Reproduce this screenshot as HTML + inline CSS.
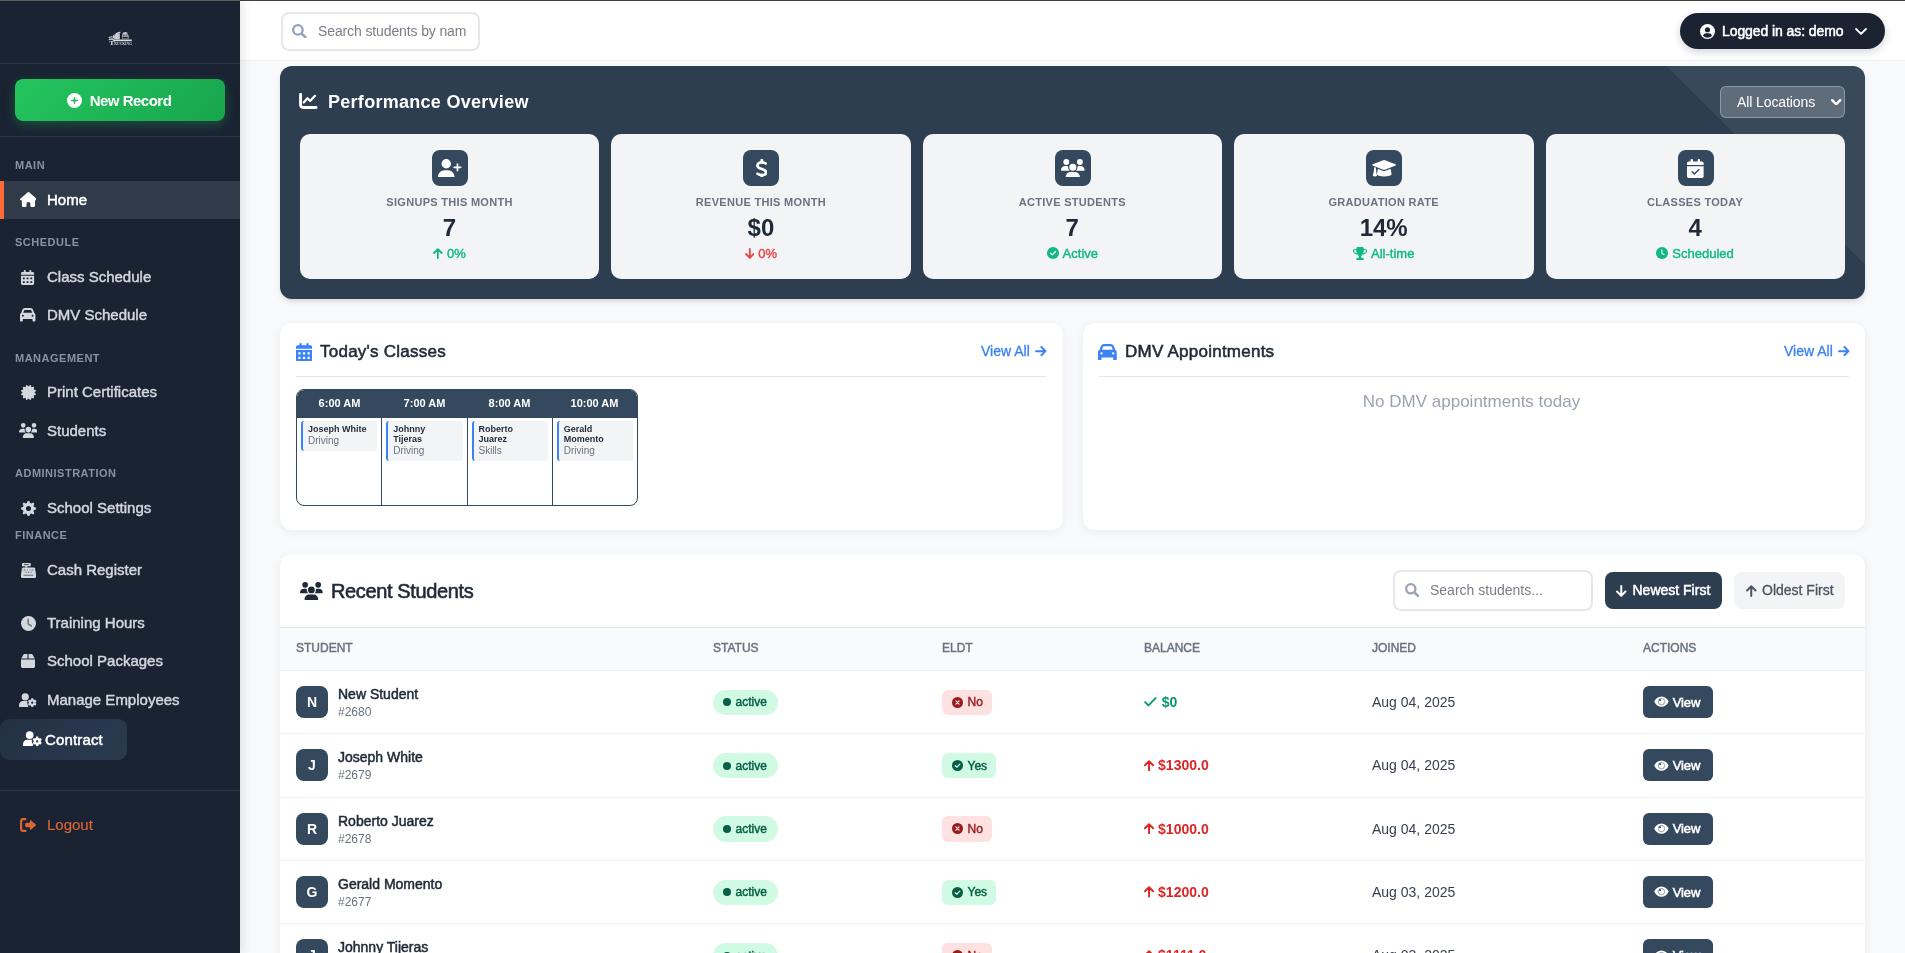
<!DOCTYPE html>
<html lang="en">
<head>
<meta charset="utf-8">
<title>Dashboard</title>
<style>
*{box-sizing:border-box;margin:0;padding:0}
html,body{width:1905px;height:953px;overflow:hidden}
body{font-family:"Liberation Sans",Arial,sans-serif;background:#f8f9fa;color:#1f2937;position:relative;-webkit-font-smoothing:antialiased}
svg{display:block;flex:none}
.abs{position:absolute}
.wrap{position:absolute;left:0;top:0;width:1905px;height:953px;overflow:hidden;will-change:transform;background:#f8f9fa}
.topline{position:absolute;left:0;top:0;width:1905px;height:1px;background:linear-gradient(90deg,#605e5b 0,#605e5b 240px,#3e3e3e 240px);z-index:50}
/* ---------- sidebar ---------- */
.sidebar{position:absolute;left:0;top:0;width:240px;height:953px;background:#1a2332;z-index:20;box-shadow:2px 0 10px rgba(15,23,42,.12)}
.sb-line{position:absolute;left:0;width:240px;height:1px;background:#2d3748}
.newrec{position:absolute;left:15px;top:79px;width:210px;height:42px;border-radius:8px;background:linear-gradient(135deg,#24c55f 0%,#18a54c 100%);box-shadow:0 4px 12px rgba(34,197,94,.28);display:flex;align-items:center;justify-content:center;color:#fff;font-weight:700;font-size:15px;letter-spacing:-.5px;--h:#1fb556;padding-right:2px}
.newrec svg{margin-right:8px}
.sec{position:absolute;left:15px;font-size:11px;font-weight:700;letter-spacing:.5px;color:#8b919d;text-transform:uppercase;line-height:14px;white-space:nowrap}
.nav{position:absolute;left:0;width:240px;height:38px;display:flex;align-items:center;color:#d3d7de;font-size:15px;font-weight:400;-webkit-text-stroke:.45px currentColor;white-space:nowrap}
.nav .ic{position:absolute;left:18px;top:0;width:20px;height:38px;display:flex;align-items:center;justify-content:center}
.nav .tx{position:absolute;left:47px;top:0;line-height:38px}
.nav.active{background:#303a49;color:#fff;-webkit-text-stroke:.5px currentColor}
.nav.active:before{content:"";position:absolute;left:0;top:0;width:4px;height:38px;background:#ff6b35}
.contract{position:absolute;left:0;top:719px;width:127px;height:41px;border-radius:9px;background:linear-gradient(135deg,#233044 0%,#2a3b50 100%);color:#fff;font-weight:400;-webkit-text-stroke:.5px #fff;letter-spacing:.15px;font-size:15px}
.logout{color:#df6434;font-weight:400;-webkit-text-stroke:.15px currentColor}
/* ---------- header ---------- */
.header{position:absolute;left:240px;top:1px;width:1665px;height:60px;background:#fff;border-bottom:1px solid #eef0f3;z-index:5}
.hsearch{position:absolute;left:41px;top:10.5px;width:199px;height:39px;border:2px solid #e5e7eb;border-radius:8px;background:#fff}
.hsearch .ph{position:absolute;left:35px;top:0;line-height:35.5px;font-size:14px;color:#7a7f87;white-space:nowrap;width:148.3px;overflow:hidden;letter-spacing:-.12px}
.userpill{position:absolute;left:1440px;top:12px;width:205px;height:36px;border-radius:18px;background:#1b2333;color:#fff;font-weight:400;-webkit-text-stroke:.5px #fff;letter-spacing:-.08px;font-size:14px;box-shadow:0 3px 8px rgba(15,23,42,.18)}

/* ---------- performance ---------- */
.perf{position:absolute;left:280px;top:66px;width:1585px;height:233px;border-radius:12px;background:#2c3e50;overflow:hidden;box-shadow:0 4px 6px -1px rgba(0,0,0,.1),0 2px 4px -2px rgba(0,0,0,.1)}
.perf-corner{position:absolute;right:0;top:0;width:198px;height:198px;background:linear-gradient(45deg,rgba(255,255,255,0) 50%,rgba(255,255,255,.06) 50%)}
.ptitle{color:#fff;font-size:18px;font-weight:700;letter-spacing:.28px;line-height:28px;white-space:nowrap}
.locsel{position:absolute;left:1440px;top:20px;width:125px;height:32px;border-radius:6px;background:rgba(255,255,255,.2);border:1px solid rgba(255,255,255,.3);color:#fff;font-size:14px;letter-spacing:-.1px}
.stat{position:absolute;top:68px;width:299.4px;height:145px;border-radius:10px;background:#f3f4f6;text-align:center}
.sic{--h:#34495e;position:absolute;left:132px;top:16px;width:36px;height:36px;border-radius:8px;background:#34495e;color:#fff;display:flex;align-items:center;justify-content:center}
.slab{position:absolute;left:0;top:61px;width:299px;line-height:14px;font-size:11px;font-weight:700;letter-spacing:.3px;color:#6b7280;text-transform:uppercase}
.sval{position:absolute;left:0;top:79px;width:299px;line-height:30px;font-size:24px;font-weight:700;color:#1f2937}
.strend{position:absolute;left:0;top:111px;width:299px;height:16px;display:flex;align-items:center;justify-content:center;font-size:13px;-webkit-text-stroke:.4px currentColor;--h:#f3f4f6}
.strend svg{margin-right:4px}
.strend.up{color:#10b981}
.strend.down{color:#ef4444}

/* ---------- cards ---------- */
.card{position:absolute;background:#fff;border-radius:12px;box-shadow:0 2px 10px rgba(15,23,42,.06)}
.ctitle{font-size:17px;font-weight:400;-webkit-text-stroke:.55px currentColor;letter-spacing:.24px;line-height:24px;color:#1f2937;white-space:nowrap}
.viewall{display:flex;align-items:center;color:#3b82f6;-webkit-text-stroke:.3px currentColor;font-size:14px;line-height:20px;white-space:nowrap}
.viewall svg{margin-left:5px}
.nodmv{text-align:center;font-size:17px;line-height:26px;color:#9ca3af}
.sched{position:absolute;left:16px;top:66px;width:342px;height:117px;border:1px solid #34495e;border-radius:8px;overflow:hidden;background:#fff}
.sh{display:flex;height:28px;background:#34495e;color:#fff;font-size:11px;font-weight:700}
.sh div{flex:1;text-align:center;line-height:27px}
.sb{display:flex;height:88px}
.sc{flex:1;border-left:1px solid #34495e;padding:3.4px 4px 0 4px}
.sc:first-child{border-left:0}
.ci{background:#f3f4f6;border-left:2px solid #3b82f6;border-radius:3px;padding:4px 4px 4px 5px}
.ci b{display:block;margin-top:-1px;padding-bottom:1px;font-size:9px;line-height:10px;font-weight:700;color:#1f2937}
.ci i{display:block;font-style:normal;font-size:10px;line-height:12px;color:#6b7280}
/* ---------- recent students ---------- */
.rtitle{font-size:20px;font-weight:400;-webkit-text-stroke:.6px currentColor;letter-spacing:-.37px;line-height:28px;color:#1f2937;white-space:nowrap}
.ssearch{position:absolute;left:1113px;top:16px;width:200px;height:41px;border:2px solid #e5e7eb;border-radius:8px;background:#fff}
.ph2{left:35px;top:0;line-height:37px;font-size:14px;color:#7a7f87;white-space:nowrap}
.btn-new{position:absolute;left:1325px;top:18px;width:117px;height:37px;border-radius:8px;background:#2c3e50;color:#fff;font-size:14px;font-weight:400;-webkit-text-stroke:.5px #fff;white-space:nowrap}
.btn-old{position:absolute;left:1454px;top:18px;width:111px;height:37px;border-radius:8px;background:#f3f4f6;color:#4b5563;font-size:14px;-webkit-text-stroke:.3px currentColor;white-space:nowrap}
.thead{position:absolute;left:0;top:73px;width:1585px;height:44px;background:#f9fafb;border-top:1px solid #e5e7eb;border-bottom:1px solid #f0f1f3}
.thead span{position:absolute;top:0;line-height:41px;font-size:12px;font-weight:400;-webkit-text-stroke:.45px currentColor;letter-spacing:0;color:#6b7280;text-transform:uppercase}
.row{position:absolute;left:0;width:1585px;height:63.35px;border-bottom:1px solid #f1f2f4}
.av{position:absolute;left:16px;top:15px;width:32px;height:32px;border-radius:8px;background:#34495e;color:#fff;font-size:14px;font-weight:700;text-align:center;line-height:32px}
.nm{position:absolute;left:58px;top:13px;line-height:20px;font-size:14px;font-weight:400;-webkit-text-stroke:.5px currentColor;color:#1f2937;white-space:nowrap}
.idn{position:absolute;left:58px;top:33px;line-height:16px;font-size:12px;color:#6b7280}
.pill{position:absolute;top:18.5px;height:25.5px;display:flex;align-items:center;font-size:12px;font-weight:400;-webkit-text-stroke:.45px currentColor;white-space:nowrap}
.pill.act{left:433px;width:65px;border-radius:13px;background:#d1fae5;color:#065f46;padding-left:10px}
.pill.act svg{margin-right:4.5px}
.pill.no{left:662px;width:50px;border-radius:6px;background:#fee2e2;color:#991b1b;padding-left:10px}
.pill.yes{left:662px;width:54px;border-radius:6px;background:#d1fae5;color:#065f46;padding-left:10px}
.pill.no svg,.pill.yes svg{margin-right:4.5px}
.bal{position:absolute;left:864px;top:21px;height:20px;display:flex;align-items:center;font-size:14px;font-weight:700;white-space:nowrap}
.bal.ok{color:#059669}.bal.ok svg{margin-right:5px}
.bal.due{color:#dc2626}.bal.due svg{margin-right:4px}
.jd{position:absolute;left:1092px;top:21px;line-height:20px;font-size:14px;color:#374151;white-space:nowrap}
.vbtn{position:absolute;left:1363px;top:15px;width:70px;height:32px;border-radius:6px;background:#34495e;color:#fff;font-size:13px;font-weight:400;-webkit-text-stroke:.55px #fff;display:flex;align-items:center;padding-left:11px;letter-spacing:-.1px}
.vbtn svg{margin-right:3.8px}
</style>
</head>
<body>
<div class="wrap">
<div class="topline"></div>
<div class="sidebar">
  <div class="abs logo" style="left:108px;top:31px;width:25px;height:15px;color:#fff"><svg width="25.00" height="15.00" viewBox="0 0 250 150" fill="currentColor"><g fill="#e6e8ec"><path d="M75 25Q100 5 125 8L122 22Q100 22 82 34Z" opacity=".9"/><path d="M48 48Q60 28 95 24L118 26V82H70L48 70Z" opacity=".85"/><path d="M142 30Q150 6 180 10Q196 14 198 34L206 44V78H142Z" opacity=".8"/><rect x="122" y="30" width="12" height="60" fill="#141b29"/><rect x="150" y="36" width="18" height="10" fill="#2a3140"/><rect x="176" y="36" width="18" height="10" fill="#2a3140"/><rect x="148" y="58" width="50" height="16" fill="#141b29"/><circle cx="66" cy="40" r="6" fill="#3a4150"/><path d="M5 62Q20 52 46 54L44 66Q20 64 8 72Z" opacity=".8"/><path d="M8 78Q30 70 52 76L62 92H232L238 102H56L44 90Q24 84 8 92Z" opacity=".85"/><rect x="60" y="84" width="178" height="16" opacity=".8"/></g><text x="12" y="140" font-family="Liberation Serif,serif" font-weight="700" fill="#c3c7cf" textLength="228" lengthAdjust="spacingAndGlyphs"><tspan font-size="64" fill="#e4e6ea">T</tspan><tspan font-size="30" fill="#d0d3da">RUCKING</tspan></text></svg></div>
  <div class="sb-line" style="top:63px"></div>
  <div class="newrec"><svg width="15.00" height="15.00" viewBox="0 0 512 512" fill="currentColor"><circle cx="256" cy="256" r="256"/><path d="M256 160V352M160 256H352" fill="none" stroke-width="52" stroke-linecap="round" style="stroke:var(--h,#fff)"/></svg><span>New Record</span></div>
  <div class="sb-line" style="top:136px"></div>

  <div class="sec" style="top:158px">MAIN</div>
  <div class="nav active" style="top:181px"><span class="ic" style="top:-.7px"><svg width="16.88" height="15.00" viewBox="0 0 576 512" fill="currentColor"><path fill-rule="evenodd" d="M266 8Q288 -8 310 8L564 230Q582 250 566 272Q556 288 512 288V460Q512 512 460 512H392Q352 512 352 472V384Q352 352 320 352H256Q224 352 224 384V472Q224 512 184 512H116Q64 512 64 460V288Q20 288 10 272Q-6 250 12 230Z"/></svg></span><span class="tx">Home</span></div>

  <div class="sec" style="top:235px">SCHEDULE</div>
  <div class="nav" style="top:258px"><span class="ic"><svg width="13.12" height="15.00" viewBox="0 0 448 512" fill="currentColor"><path fill-rule="evenodd" d="M96 28Q96 0 128 0Q160 0 160 28V64H288V28Q288 0 320 0Q352 0 352 28V64H400Q448 64 448 112V160H0V112Q0 64 48 64H96ZM0 192H448V464Q448 512 400 512H48Q0 512 0 464ZM64 264v48q0 8 8 8h48q8 0 8-8v-48q0-8-8-8h-48q-8 0-8 8Z M192 264v48q0 8 8 8h48q8 0 8-8v-48q0-8-8-8h-48q-8 0-8 8Z M320 264v48q0 8 8 8h48q8 0 8-8v-48q0-8-8-8h-48q-8 0-8 8ZM64 392v48q0 8 8 8h48q8 0 8-8v-48q0-8-8-8h-48q-8 0-8 8Z M192 392v48q0 8 8 8h48q8 0 8-8v-48q0-8-8-8h-48q-8 0-8 8Z M320 392v48q0 8 8 8h48q8 0 8-8v-48q0-8-8-8h-48q-8 0-8 8Z"/></svg></span><span class="tx">Class Schedule</span></div>
  <div class="nav" style="top:296px"><span class="ic"><svg width="15.43" height="13.50" viewBox="0 0 512 448" fill="currentColor"><g transform="translate(0,-32)"><path d="M135.200 117.400L109.100 192H402.900l-26.100-74.600C372.300 104.600 360.200 96 346.600 96H165.400c-13.600 0-25.700 8.600-30.200 21.400zM39.600 196.800L74.800 96.300C88.300 57.800 124.600 32 165.400 32H346.600c40.800 0 77.100 25.800 90.600 64.300l35.200 100.500c23.200 9.600 39.600 32.500 39.600 59.200V400v48c0 17.700-14.300 32-32 32H448c-17.700 0-32-14.300-32-32V400H96v48c0 17.700-14.300 32-32 32H32c-17.700 0-32-14.300-32-32V400 256c0-26.700 16.400-49.600 39.600-59.200zM128 288a32 32 0 1 0 -64 0 32 32 0 1 0 64 0zm288 32a32 32 0 1 0 0-64 32 32 0 1 0 0 64z"/></g></svg></span><span class="tx">DMV Schedule</span></div>

  <div class="sec" style="top:351px">MANAGEMENT</div>
  <div class="nav" style="top:373px"><span class="ic"><svg width="15.00" height="15.00" viewBox="0 0 1537 1537" fill="currentColor"><path d="M1376 768 1514 903Q1544 931 1534 973Q1522 1014 1482 1024L1294 1072L1348 1258Q1360 1299 1328 1328Q1300 1359 1258 1347L1072 1294L1024 1482Q1014 1522 974 1534Q962 1536 954 1536Q924 1536 904 1514L768 1376L634 1514Q606 1544 564 1534Q522 1523 512 1482L464 1294L278 1347Q238 1359 208 1328Q178 1299 190 1258L242 1072L54 1024Q14 1014 2 973Q-8 931 22 903L160 768L22 633Q-8 605 2 563Q14 522 54 512L242 464L190 278Q178 237 208 208Q238 177 278 189L464 242L512 54Q522 13 564 3Q604 -9 634 22L768 161L904 22Q932 -8 974 3Q1014 13 1024 54L1072 242L1258 189Q1300 177 1328 208Q1360 237 1348 278L1294 464L1482 512Q1522 522 1534 563Q1544 605 1514 633Z"/></svg></span><span class="tx">Print Certificates</span></div>
  <div class="nav" style="top:412px"><span class="ic" style="top:-.7px"><svg width="18.75" height="15.00" viewBox="0 0 640 512" fill="currentColor"><path d="M144 0a80 80 0 1 1 0 160A80 80 0 1 1 144 0zM512 0a80 80 0 1 1 0 160A80 80 0 1 1 512 0zM0 298.700C0 239.800 47.800 192 106.700 192h42.700c15.900 0 31 3.500 44.600 9.700c-1.300 7.200-1.900 14.700-1.900 22.300c0 38.200 16.800 72.500 43.300 96c-.200 0-.400 0-.700 0H21.300C9.600 320 0 310.400 0 298.700zM405.300 320c-.200 0-.400 0-.700 0c26.600-23.500 43.300-57.800 43.300-96c0-7.600-.700-15-1.900-22.300c13.600-6.300 28.700-9.700 44.600-9.700h42.700C592.200 192 640 239.800 640 298.700c0 11.800-9.600 21.300-21.300 21.300H405.300zM224 224a96 96 0 1 1 192 0 96 96 0 1 1 -192 0zM128 485.300C128 411.700 187.700 352 261.300 352H378.700C452.300 352 512 411.700 512 485.300c0 14.700-11.900 26.700-26.700 26.700H154.700c-14.700 0-26.700-11.900-26.700-26.700z"/></svg></span><span class="tx">Students</span></div>

  <div class="sec" style="top:466px">ADMINISTRATION</div>
  <div class="nav" style="top:489px"><span class="ic"><svg width="15.00" height="15.00" viewBox="0 0 512 512" fill="currentColor"><path fill-rule="evenodd" d="M201.3 67.8 L225.9 1.8 L286.1 1.8 L310.7 67.8 L350.4 84.2 L414.5 55.0 L457.0 97.5 L427.8 161.6 L444.2 201.3 L510.2 225.9 L510.2 286.1 L444.2 310.7 L427.8 350.4 L457.0 414.5 L414.5 457.0 L350.4 427.8 L310.7 444.2 L286.1 510.2 L225.9 510.2 L201.3 444.2 L161.6 427.8 L97.5 457.0 L55.0 414.5 L84.2 350.4 L67.8 310.7 L1.8 286.1 L1.8 225.9 L67.8 201.3 L84.2 161.6 L55.0 97.5 L97.5 55.0 L161.6 84.2Z M170.0 256.0 a86.0 86.0 0 1 0 172.0 0 a86.0 86.0 0 1 0 -172.0 0Z"/></svg></span><span class="tx">School Settings</span></div>

  <div class="sec" style="top:528px">FINANCE</div>
  <div class="nav" style="top:551px"><span class="ic"><svg width="15.00" height="15.00" viewBox="0 0 512 512" fill="currentColor"><rect x="32" y="0" width="300" height="112" rx="30"/><rect x="96" y="42" width="172" height="28" rx="14" fill="#1a2332"/><rect x="150" y="100" width="64" height="60"/><path d="M70 150H442Q470 150 476 178L512 380V470Q512 512 470 512H42Q0 512 0 470V380L36 178Q42 150 70 150Z"/><g fill="#1a2332" opacity=".62"><rect x="92" y="224" width="60" height="34" rx="10"/><circle cx="210" cy="241" r="18"/><circle cx="304" cy="241" r="18"/><rect x="360" y="224" width="60" height="34" rx="10"/><circle cx="170" cy="312" r="18"/><rect x="226" y="295" width="60" height="34" rx="10"/><circle cx="342" cy="312" r="18"/></g><rect x="86" y="400" width="340" height="34" rx="10" fill="#1a2332" opacity=".6"/></svg></span><span class="tx">Cash Register</span></div>

  <div class="nav" style="top:604px"><span class="ic"><svg width="15.00" height="15.00" viewBox="0 0 512 512" fill="currentColor"><circle cx="256" cy="256" r="256"/><path d="M244 110V266L350 340" fill="none" stroke="#1a2332" stroke-opacity=".55" stroke-width="52" stroke-linecap="round" stroke-linejoin="round"/></svg></span><span class="tx">Training Hours</span></div>
  <div class="nav" style="top:642px"><span class="ic"><svg width="14.00" height="14.00" viewBox="0 0 512 512" fill="currentColor"><path d="M86 30Q98 0 130 0H236V164H10Z"/><path d="M426 30Q414 0 382 0H276V164H502Z"/><path d="M0 204H512V460Q512 512 460 512H52Q0 512 0 460Z"/></svg></span><span class="tx">School Packages</span></div>
  <div class="nav" style="top:681px"><span class="ic"><svg width="17.50" height="14.00" viewBox="0 0 640 512" fill="currentColor"><circle cx="228" cy="138" r="132"/><path d="M0 512V452C0 362 62 296 150 296H306C340 296 372 308 398 330L330 512Z"/><circle cx="484" cy="352" r="182" style="fill:var(--h,#1a2332)"/><path fill-rule="evenodd" d="M438.4 236.7 L449.9 191.6 L518.1 191.6 L529.6 236.7 L561.0 254.8 L605.9 242.3 L640.0 301.3 L606.7 333.9 L606.7 370.1 L640.0 402.7 L605.9 461.7 L561.0 449.2 L529.6 467.3 L518.1 512.4 L449.9 512.4 L438.4 467.3 L407.0 449.2 L362.1 461.7 L328.0 402.7 L361.3 370.1 L361.3 333.9 L328.0 301.3 L362.1 242.3 L407.0 254.8Z M444.0 352.0 a40.0 40.0 0 1 0 80.0 0 a40.0 40.0 0 1 0 -80.0 0Z"/></svg></span><span class="tx">Manage Employees</span></div>

  <div class="contract" style="--h:#263347"><span class="abs" style="left:23px;top:12px"><svg width="18.75" height="15.00" viewBox="0 0 640 512" fill="currentColor"><circle cx="228" cy="138" r="132"/><path d="M0 512V452C0 362 62 296 150 296H306C340 296 372 308 398 330L330 512Z"/><circle cx="484" cy="352" r="182" style="fill:var(--h,#1a2332)"/><path fill-rule="evenodd" d="M438.4 236.7 L449.9 191.6 L518.1 191.6 L529.6 236.7 L561.0 254.8 L605.9 242.3 L640.0 301.3 L606.7 333.9 L606.7 370.1 L640.0 402.7 L605.9 461.7 L561.0 449.2 L529.6 467.3 L518.1 512.4 L449.9 512.4 L438.4 467.3 L407.0 449.2 L362.1 461.7 L328.0 402.7 L361.3 370.1 L361.3 333.9 L328.0 301.3 L362.1 242.3 L407.0 254.8Z M444.0 352.0 a40.0 40.0 0 1 0 80.0 0 a40.0 40.0 0 1 0 -80.0 0Z"/></svg></span><span class="abs" style="left:45px;top:0;line-height:41px">Contract</span></div>

  <div class="sb-line" style="top:790px"></div>
  <div class="nav logout" style="top:806px"><span class="ic"><svg width="16.00" height="14.00" viewBox="0 0 512 448" fill="currentColor"><path d="M176 36H100Q36 36 36 100V348Q36 412 100 412H176" fill="none" stroke="currentColor" stroke-width="68" stroke-linecap="round" stroke-linejoin="round" /><path d="M345 70Q318 48 318 90V152H200Q168 152 168 184V264Q168 296 200 296H318V358Q318 400 345 378L500 246Q524 224 500 202Z"/></svg></span><span class="tx">Logout</span></div>
</div>

<div class="header">
  <div class="hsearch"><span class="abs" style="left:9px;top:10.5px;color:#94a3b8"><svg width="14.60" height="14.30" viewBox="0 0 148 145" fill="currentColor"><circle cx="60" cy="60" r="48" fill="none" stroke="currentColor" stroke-width="24"/><path d="M97 97L134 132" fill="none" stroke="currentColor" stroke-width="26" stroke-linecap="round"/></svg></span><span class="ph">Search students by name</span></div>
  <div class="userpill"><span class="abs" style="left:20px;top:10.5px"><svg width="15.00" height="15.00" viewBox="0 0 512 512" fill="currentColor"><circle cx="256" cy="256" r="256"/><circle cx="256" cy="196" r="88" style="fill:var(--h,#1b2333)"/><path d="M100 400Q130 316 210 316H302Q382 316 412 400Q340 470 256 470Q172 470 100 400Z" style="fill:var(--h,#1b2333)"/></svg></span><span class="abs ptx" style="left:42px;top:0;line-height:36px;white-space:nowrap">Logged in as: demo</span><span class="abs" style="left:175px;top:15px"><svg width="12.03" height="7.00" viewBox="0 0 110 64" fill="currentColor"><path d="M10 9L55 54L100 9" fill="none" stroke="currentColor" stroke-width="17" stroke-linecap="round" stroke-linejoin="round" /></svg></span></div>
</div>

<div class="perf">
  <div class="perf-corner"></div>
  <div class="abs" style="left:19px;top:27px;color:#fff"><svg width="18.65" height="16.00" viewBox="0 0 190 163" fill="currentColor"><path d="M16 14V120Q16 147 43 147H174" fill="none" stroke="currentColor" stroke-width="30" stroke-linecap="round" stroke-linejoin="round" /><path d="M48 97L86 54L113 82L163 29" fill="none" stroke="currentColor" stroke-width="23" stroke-linecap="round" stroke-linejoin="round" /></svg></div>
  <div class="abs ptitle" style="left:48px;top:22px">Performance Overview</div>
  <div class="locsel"><span class="abs" style="left:16px;top:0;line-height:30px;white-space:nowrap">All Locations</span><span class="abs" style="left:110px;top:11.5px"><svg width="10.51" height="6.50" viewBox="0 0 110 68" fill="currentColor"><path d="M13 13L55 55L97 13" fill="none" stroke="currentColor" stroke-width="26" stroke-linecap="round" stroke-linejoin="round" /></svg></span></div>

  <div class="stat" style="left:20px"><div class="sic"><svg width="23.62" height="18.90" viewBox="0 0 640 512" fill="currentColor"><path d="M96 128a128 128 0 1 1 256 0A128 128 0 1 1 96 128zM0 482.3C0 383.8 79.800 304 178.300 304h91.400C368.200 304 448 383.800 448 482.300c0 16.400-13.300 29.700-29.700 29.700H29.700C13.300 512 0 498.700 0 482.300zM504 312V248H440c-13.300 0-24-10.700-24-24s10.700-24 24-24h64V136c0-13.300 10.700-24 24-24s24 10.700 24 24v64h64c13.300 0 24 10.700 24 24s-10.700 24-24 24H552v64c0 13.300-10.700 24-24 24s-24-10.700-24-24z"/></svg></div><div class="slab">SIGNUPS THIS MONTH</div><div class="sval">7</div><div class="strend up"><svg width="9.65" height="11.00" viewBox="0 0 100 114" fill="currentColor"><path d="M50 104V14M10 52L50 12L90 52" fill="none" stroke="currentColor" stroke-width="19" stroke-linecap="round" stroke-linejoin="round" /></svg><span>0%</span></div></div>
  <div class="stat" style="left:331.4px"><div class="sic"><svg width="11.50" height="18.90" viewBox="0 0 115 189" fill="currentColor"><path d="M58 8V32M58 160V181" fill="none" stroke="currentColor" stroke-width="27" stroke-linecap="round" stroke-linejoin="round" /><path d="M97 45C86 37 71 33 57 33C32 33 14 47 14 66C14 87 30 93 58 100C87 108 101 115 101 133C101 151 84 162 59 162C42 162 27 157 15 148" fill="none" stroke="currentColor" stroke-width="27" stroke-linecap="round" stroke-linejoin="round" /></svg></div><div class="slab">REVENUE THIS MONTH</div><div class="sval">$0</div><div class="strend down"><svg width="9.65" height="11.00" viewBox="0 0 100 114" fill="currentColor"><path d="M50 10V100M10 62L50 102L90 62" fill="none" stroke="currentColor" stroke-width="19" stroke-linecap="round" stroke-linejoin="round" /></svg><span>0%</span></div></div>
  <div class="stat" style="left:642.8px"><div class="sic"><svg width="23.62" height="18.90" viewBox="0 0 640 512" fill="currentColor"><path d="M144 0a80 80 0 1 1 0 160A80 80 0 1 1 144 0zM512 0a80 80 0 1 1 0 160A80 80 0 1 1 512 0zM0 298.700C0 239.800 47.800 192 106.700 192h42.700c15.900 0 31 3.500 44.600 9.700c-1.300 7.200-1.900 14.700-1.900 22.300c0 38.200 16.800 72.500 43.300 96c-.200 0-.400 0-.700 0H21.300C9.600 320 0 310.400 0 298.700zM405.300 320c-.200 0-.400 0-.700 0c26.600-23.500 43.300-57.800 43.300-96c0-7.600-.700-15-1.900-22.300c13.600-6.300 28.700-9.700 44.600-9.700h42.700C592.200 192 640 239.800 640 298.700c0 11.800-9.600 21.300-21.300 21.300H405.300zM224 224a96 96 0 1 1 192 0 96 96 0 1 1 -192 0zM128 485.300C128 411.700 187.700 352 261.300 352H378.700C452.300 352 512 411.700 512 485.300c0 14.700-11.900 26.700-26.700 26.700H154.700c-14.700 0-26.700-11.900-26.700-26.700z"/></svg></div><div class="slab">ACTIVE STUDENTS</div><div class="sval">7</div><div class="strend up"><svg width="12.00" height="12.00" viewBox="0 0 512 512" fill="currentColor"><circle cx="256" cy="256" r="256"/><path d="M150 265L225 335L365 190" fill="none" stroke-width="58" stroke-linecap="round" stroke-linejoin="round" style="stroke:var(--h,#fff)"/></svg><span>Active</span></div></div>
  <div class="stat" style="left:954.2px"><div class="sic"><svg width="24.20" height="17.00" viewBox="0 0 242 170" fill="currentColor"><path d="M113 2Q121 -1 129 2L236 43Q244 48 236 54L129 97Q121 100 113 97L6 54Q-2 48 6 43Z"/><path d="M58 88L113 110Q121 113 129 110L186 87L196 142Q196 150 182 156Q121 174 62 156Q50 150 50 142Z"/><path d="M24 70L38 76Q42 120 50 160Q30 168 8 160Q20 110 24 70Z"/></svg></div><div class="slab">GRADUATION RATE</div><div class="sval">14%</div><div class="strend up"><svg width="14.08" height="13.00" viewBox="0 0 1664 1536" fill="currentColor"><path d="M458 755Q384 593 384 384H128V480Q128 558 222 642Q317 726 458 755ZM1536 480V384H1280Q1280 593 1206 755Q1347 726 1442 642Q1536 558 1536 480ZM1664 352V480Q1664 551 1622 623Q1581 695 1510 753Q1440 811 1338 850Q1235 890 1122 895Q1080 949 1027 990Q989 1024 974 1062Q960 1101 960 1152Q960 1206 990 1243Q1021 1280 1088 1280Q1163 1280 1222 1326Q1280 1371 1280 1440V1504Q1280 1518 1271 1527Q1262 1536 1248 1536H416Q402 1536 393 1527Q384 1518 384 1504V1440Q384 1371 442 1326Q501 1280 576 1280Q643 1280 674 1243Q704 1206 704 1152Q704 1101 690 1062Q675 1024 637 990Q584 949 542 895Q429 890 326 850Q224 811 154 753Q83 695 42 623Q0 551 0 480V352Q0 312 28 284Q56 256 96 256H384V160Q384 94 431 47Q478 0 544 0H1120Q1186 0 1233 47Q1280 94 1280 160V256H1568Q1608 256 1636 284Q1664 312 1664 352Z"/></svg><span>All-time</span></div></div>
  <div class="stat" style="left:1265.6px"><div class="sic"><svg width="16.62" height="19.00" viewBox="0 0 448 512" fill="currentColor"><rect x="96" y="0" width="64" height="120" rx="28"/><rect x="288" y="0" width="64" height="120" rx="28"/><path d="M0 112Q0 64 48 64H400Q448 64 448 112V160H0Z"/><path d="M0 192H448V464Q448 512 400 512H48Q0 512 0 464Z"/><path d="M140 345L200 405L320 285" fill="none" stroke-width="40" stroke-linecap="round" stroke-linejoin="round" style="stroke:var(--h,#fff)"/></svg></div><div class="slab">CLASSES TODAY</div><div class="sval">4</div><div class="strend up"><svg width="12.00" height="12.00" viewBox="0 0 512 512" fill="currentColor"><circle cx="256" cy="256" r="256"/><path d="M250 120V262L340 322" fill="none" stroke-width="50" stroke-linecap="round" stroke-linejoin="round" style="stroke:var(--h,#fff)"/></svg><span>Scheduled</span></div></div>
</div>

<div class="card" style="left:280px;top:323px;width:783px;height:207px">
  <div class="abs" style="left:16px;top:20px;color:#3b82f6"><svg width="16.10" height="18.40" viewBox="0 0 448 512" fill="currentColor"><path fill-rule="evenodd" d="M96 28Q96 0 128 0Q160 0 160 28V64H288V28Q288 0 320 0Q352 0 352 28V64H400Q448 64 448 112V160H0V112Q0 64 48 64H96ZM0 192H448V464Q448 512 400 512H48Q0 512 0 464ZM64 264v48q0 8 8 8h48q8 0 8-8v-48q0-8-8-8h-48q-8 0-8 8Z M192 264v48q0 8 8 8h48q8 0 8-8v-48q0-8-8-8h-48q-8 0-8 8Z M320 264v48q0 8 8 8h48q8 0 8-8v-48q0-8-8-8h-48q-8 0-8 8ZM64 392v48q0 8 8 8h48q8 0 8-8v-48q0-8-8-8h-48q-8 0-8 8Z M192 392v48q0 8 8 8h48q8 0 8-8v-48q0-8-8-8h-48q-8 0-8 8Z M320 392v48q0 8 8 8h48q8 0 8-8v-48q0-8-8-8h-48q-8 0-8 8Z"/></svg></div>
  <div class="abs ctitle" style="left:40px;top:17px">Today's Classes</div>
  <div class="abs viewall" style="left:701px;top:18px"><span>View All</span><svg width="11.74" height="10.30" viewBox="0 0 114 100" fill="currentColor"><path d="M10 50H100M62 10L102 50L62 90" fill="none" stroke="currentColor" stroke-width="19" stroke-linecap="round" stroke-linejoin="round" /></svg></div>
  <div class="abs" style="left:16px;top:53px;width:751px;height:1px;background:#e5e7eb"></div>
  <div class="sched">
    <div class="sh"><div>6:00 AM</div><div>7:00 AM</div><div>8:00 AM</div><div>10:00 AM</div></div>
    <div class="sb">
      <div class="sc"><div class="ci"><b>Joseph White</b><i>Driving</i></div></div>
      <div class="sc"><div class="ci"><b>Johnny<br>Tijeras</b><i>Driving</i></div></div>
      <div class="sc"><div class="ci"><b>Roberto<br>Juarez</b><i>Skills</i></div></div>
      <div class="sc"><div class="ci"><b>Gerald<br>Momento</b><i>Driving</i></div></div>
    </div>
  </div>
</div>
<div class="card" style="left:1083px;top:323px;width:782px;height:207px">
  <div class="abs" style="left:15px;top:20.5px;color:#3b82f6"><svg width="18.74" height="16.40" viewBox="0 0 512 448" fill="currentColor"><g transform="translate(0,-32)"><path d="M135.200 117.400L109.100 192H402.900l-26.100-74.600C372.300 104.600 360.200 96 346.600 96H165.400c-13.600 0-25.700 8.600-30.200 21.400zM39.600 196.800L74.800 96.300C88.300 57.800 124.600 32 165.400 32H346.600c40.800 0 77.100 25.800 90.600 64.300l35.200 100.500c23.200 9.600 39.600 32.500 39.600 59.200V400v48c0 17.700-14.300 32-32 32H448c-17.700 0-32-14.300-32-32V400H96v48c0 17.700-14.300 32-32 32H32c-17.700 0-32-14.300-32-32V400 256c0-26.700 16.400-49.600 39.600-59.200zM128 288a32 32 0 1 0 -64 0 32 32 0 1 0 64 0zm288 32a32 32 0 1 0 0-64 32 32 0 1 0 0 64z"/></g></svg></div>
  <div class="abs ctitle" style="left:42px;top:17px">DMV Appointments</div>
  <div class="abs viewall" style="left:701px;top:18px"><span>View All</span><svg width="11.74" height="10.30" viewBox="0 0 114 100" fill="currentColor"><path d="M10 50H100M62 10L102 50L62 90" fill="none" stroke="currentColor" stroke-width="19" stroke-linecap="round" stroke-linejoin="round" /></svg></div>
  <div class="abs" style="left:16px;top:53px;width:750px;height:1px;background:#e5e7eb"></div>
  <div class="abs nodmv" style="left:0;top:66px;width:777px">No DMV appointments today</div>
</div>

<div class="card" style="left:280px;top:554px;width:1585px;height:420px;border-radius:12px 12px 0 0">
  <div class="abs" style="left:20px;top:28px;color:#1f2937"><svg width="22.75" height="18.20" viewBox="0 0 640 512" fill="currentColor"><path d="M144 0a80 80 0 1 1 0 160A80 80 0 1 1 144 0zM512 0a80 80 0 1 1 0 160A80 80 0 1 1 512 0zM0 298.700C0 239.800 47.800 192 106.700 192h42.700c15.900 0 31 3.500 44.600 9.700c-1.300 7.200-1.900 14.700-1.900 22.300c0 38.200 16.800 72.500 43.300 96c-.200 0-.400 0-.700 0H21.300C9.600 320 0 310.400 0 298.700zM405.300 320c-.200 0-.400 0-.700 0c26.600-23.500 43.300-57.800 43.300-96c0-7.600-.700-15-1.900-22.300c13.600-6.300 28.700-9.700 44.600-9.700h42.700C592.200 192 640 239.800 640 298.700c0 11.800-9.600 21.300-21.300 21.300H405.300zM224 224a96 96 0 1 1 192 0 96 96 0 1 1 -192 0zM128 485.300C128 411.700 187.700 352 261.300 352H378.700C452.300 352 512 411.700 512 485.300c0 14.700-11.900 26.700-26.700 26.700H154.700c-14.700 0-26.700-11.900-26.700-26.700z"/></svg></div>
  <div class="abs rtitle" style="left:51px;top:23px">Recent Students</div>
  <div class="ssearch"><span class="abs" style="left:10px;top:11px;color:#9aa3b2"><svg width="14.29" height="14.00" viewBox="0 0 148 145" fill="currentColor"><circle cx="60" cy="60" r="48" fill="none" stroke="currentColor" stroke-width="24"/><path d="M97 97L134 132" fill="none" stroke="currentColor" stroke-width="26" stroke-linecap="round"/></svg></span><span class="abs ph2">Search students...</span></div>
  <div class="btn-new"><span class="abs" style="left:11px;top:12.5px"><svg width="10.53" height="12.00" viewBox="0 0 100 114" fill="currentColor"><path d="M50 10V100M10 62L50 102L90 62" fill="none" stroke="currentColor" stroke-width="19" stroke-linecap="round" stroke-linejoin="round" /></svg></span><span class="abs" style="left:27.5px;top:0;line-height:37px">Newest First</span></div>
  <div class="btn-old"><span class="abs" style="left:12px;top:12.5px"><svg width="10.53" height="12.00" viewBox="0 0 100 114" fill="currentColor"><path d="M50 104V14M10 52L50 12L90 52" fill="none" stroke="currentColor" stroke-width="19" stroke-linecap="round" stroke-linejoin="round" /></svg></span><span class="abs" style="left:28px;top:0;line-height:37px">Oldest First</span></div>
  <div class="thead">
    <span style="left:16px">STUDENT</span><span style="left:433px">STATUS</span><span style="left:662px">ELDT</span><span style="left:864px">BALANCE</span><span style="left:1092px">JOINED</span><span style="left:1363px">ACTIONS</span>
  </div>
    <div class="row" style="top:117.00px">
    <div class="av">N</div><div class="nm">New Student</div><div class="idn">#2680</div>
    <span class="pill act"><svg width="8.00" height="8.00" viewBox="0 0 10 10" fill="currentColor"><circle cx="5" cy="5" r="5"/></svg><span>active</span></span>
    <span class="pill no" style="--h:#fee2e2"><svg width="11.00" height="11.00" viewBox="0 0 512 512" fill="currentColor"><circle cx="256" cy="256" r="256"/><path d="M180 180L332 332M332 180L180 332" fill="none" stroke-width="56" stroke-linecap="round" style="stroke:var(--h,#fff)"/></svg><span>No</span></span>
    <span class="bal ok"><svg width="12.67" height="9.50" viewBox="0 0 120 90" fill="currentColor"><path d="M10 48L42 80L110 10" fill="none" stroke="currentColor" stroke-width="17" stroke-linecap="round" stroke-linejoin="round" /></svg><span>$0</span></span>
    <span class="jd">Aug 04, 2025</span>
    <span class="vbtn"><svg width="14.90" height="11.20" viewBox="0 0 149 112" fill="currentColor"><path d="M2 56Q10 36 30 20Q50 4 74.500 4Q99 4 119 20Q139 36 147 56Q139 76 119 92Q99 108 74.500 108Q50 108 30 92Q10 76 2 56Z"/><circle cx="74.500" cy="56" r="32" fill="none" stroke-width="7" style="stroke:var(--h,#34495e)" stroke-opacity=".75"/><circle cx="60" cy="42" r="11" style="fill:var(--h,#34495e)" fill-opacity=".9"/></svg><span>View</span></span>
  </div>
  <div class="row" style="top:180.35px">
    <div class="av">J</div><div class="nm">Joseph White</div><div class="idn">#2679</div>
    <span class="pill act"><svg width="8.00" height="8.00" viewBox="0 0 10 10" fill="currentColor"><circle cx="5" cy="5" r="5"/></svg><span>active</span></span>
    <span class="pill yes" style="--h:#d1fae5"><svg width="11.00" height="11.00" viewBox="0 0 512 512" fill="currentColor"><circle cx="256" cy="256" r="256"/><path d="M150 265L225 335L365 190" fill="none" stroke-width="58" stroke-linecap="round" stroke-linejoin="round" style="stroke:var(--h,#fff)"/></svg><span>Yes</span></span>
    <span class="bal due"><svg width="10.09" height="11.50" viewBox="0 0 100 114" fill="currentColor"><path d="M50 104V14M10 52L50 12L90 52" fill="none" stroke="currentColor" stroke-width="19" stroke-linecap="round" stroke-linejoin="round" /></svg><span>$1300.0</span></span>
    <span class="jd">Aug 04, 2025</span>
    <span class="vbtn"><svg width="14.90" height="11.20" viewBox="0 0 149 112" fill="currentColor"><path d="M2 56Q10 36 30 20Q50 4 74.500 4Q99 4 119 20Q139 36 147 56Q139 76 119 92Q99 108 74.500 108Q50 108 30 92Q10 76 2 56Z"/><circle cx="74.500" cy="56" r="32" fill="none" stroke-width="7" style="stroke:var(--h,#34495e)" stroke-opacity=".75"/><circle cx="60" cy="42" r="11" style="fill:var(--h,#34495e)" fill-opacity=".9"/></svg><span>View</span></span>
  </div>
  <div class="row" style="top:243.70px">
    <div class="av">R</div><div class="nm">Roberto Juarez</div><div class="idn">#2678</div>
    <span class="pill act"><svg width="8.00" height="8.00" viewBox="0 0 10 10" fill="currentColor"><circle cx="5" cy="5" r="5"/></svg><span>active</span></span>
    <span class="pill no" style="--h:#fee2e2"><svg width="11.00" height="11.00" viewBox="0 0 512 512" fill="currentColor"><circle cx="256" cy="256" r="256"/><path d="M180 180L332 332M332 180L180 332" fill="none" stroke-width="56" stroke-linecap="round" style="stroke:var(--h,#fff)"/></svg><span>No</span></span>
    <span class="bal due"><svg width="10.09" height="11.50" viewBox="0 0 100 114" fill="currentColor"><path d="M50 104V14M10 52L50 12L90 52" fill="none" stroke="currentColor" stroke-width="19" stroke-linecap="round" stroke-linejoin="round" /></svg><span>$1000.0</span></span>
    <span class="jd">Aug 04, 2025</span>
    <span class="vbtn"><svg width="14.90" height="11.20" viewBox="0 0 149 112" fill="currentColor"><path d="M2 56Q10 36 30 20Q50 4 74.500 4Q99 4 119 20Q139 36 147 56Q139 76 119 92Q99 108 74.500 108Q50 108 30 92Q10 76 2 56Z"/><circle cx="74.500" cy="56" r="32" fill="none" stroke-width="7" style="stroke:var(--h,#34495e)" stroke-opacity=".75"/><circle cx="60" cy="42" r="11" style="fill:var(--h,#34495e)" fill-opacity=".9"/></svg><span>View</span></span>
  </div>
  <div class="row" style="top:307.05px">
    <div class="av">G</div><div class="nm">Gerald Momento</div><div class="idn">#2677</div>
    <span class="pill act"><svg width="8.00" height="8.00" viewBox="0 0 10 10" fill="currentColor"><circle cx="5" cy="5" r="5"/></svg><span>active</span></span>
    <span class="pill yes" style="--h:#d1fae5"><svg width="11.00" height="11.00" viewBox="0 0 512 512" fill="currentColor"><circle cx="256" cy="256" r="256"/><path d="M150 265L225 335L365 190" fill="none" stroke-width="58" stroke-linecap="round" stroke-linejoin="round" style="stroke:var(--h,#fff)"/></svg><span>Yes</span></span>
    <span class="bal due"><svg width="10.09" height="11.50" viewBox="0 0 100 114" fill="currentColor"><path d="M50 104V14M10 52L50 12L90 52" fill="none" stroke="currentColor" stroke-width="19" stroke-linecap="round" stroke-linejoin="round" /></svg><span>$1200.0</span></span>
    <span class="jd">Aug 03, 2025</span>
    <span class="vbtn"><svg width="14.90" height="11.20" viewBox="0 0 149 112" fill="currentColor"><path d="M2 56Q10 36 30 20Q50 4 74.500 4Q99 4 119 20Q139 36 147 56Q139 76 119 92Q99 108 74.500 108Q50 108 30 92Q10 76 2 56Z"/><circle cx="74.500" cy="56" r="32" fill="none" stroke-width="7" style="stroke:var(--h,#34495e)" stroke-opacity=".75"/><circle cx="60" cy="42" r="11" style="fill:var(--h,#34495e)" fill-opacity=".9"/></svg><span>View</span></span>
  </div>
  <div class="row" style="top:370.40px">
    <div class="av">J</div><div class="nm">Johnny Tijeras</div><div class="idn">#2676</div>
    <span class="pill act"><svg width="8.00" height="8.00" viewBox="0 0 10 10" fill="currentColor"><circle cx="5" cy="5" r="5"/></svg><span>active</span></span>
    <span class="pill no" style="--h:#fee2e2"><svg width="11.00" height="11.00" viewBox="0 0 512 512" fill="currentColor"><circle cx="256" cy="256" r="256"/><path d="M180 180L332 332M332 180L180 332" fill="none" stroke-width="56" stroke-linecap="round" style="stroke:var(--h,#fff)"/></svg><span>No</span></span>
    <span class="bal due"><svg width="10.09" height="11.50" viewBox="0 0 100 114" fill="currentColor"><path d="M50 104V14M10 52L50 12L90 52" fill="none" stroke="currentColor" stroke-width="19" stroke-linecap="round" stroke-linejoin="round" /></svg><span>$1111.0</span></span>
    <span class="jd">Aug 03, 2025</span>
    <span class="vbtn"><svg width="14.90" height="11.20" viewBox="0 0 149 112" fill="currentColor"><path d="M2 56Q10 36 30 20Q50 4 74.500 4Q99 4 119 20Q139 36 147 56Q139 76 119 92Q99 108 74.500 108Q50 108 30 92Q10 76 2 56Z"/><circle cx="74.500" cy="56" r="32" fill="none" stroke-width="7" style="stroke:var(--h,#34495e)" stroke-opacity=".75"/><circle cx="60" cy="42" r="11" style="fill:var(--h,#34495e)" fill-opacity=".9"/></svg><span>View</span></span>
  </div>
</div>

</div>
</body>
</html>
